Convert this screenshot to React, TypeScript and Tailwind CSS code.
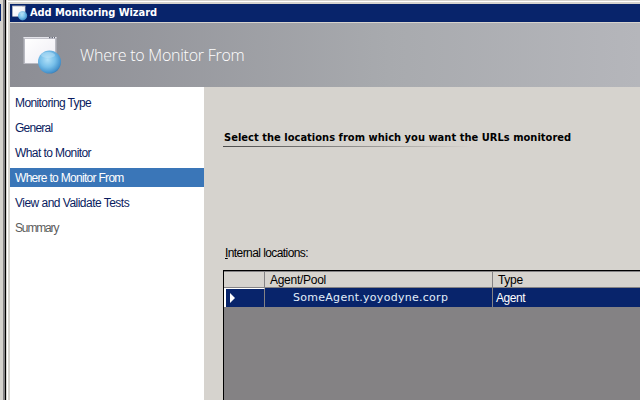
import React from 'react';

function MonitorIcon({ size }: { size: number }) {
  return (
    <svg width={size} height={size} viewBox="0 0 40 40" className="block shrink-0">
      <defs>
        <linearGradient id="pane" x1="0" y1="0" x2="1" y2="1">
          <stop offset="0" stopColor="#ffffff" />
          <stop offset="1" stopColor="#efedf4" />
        </linearGradient>
        <radialGradient id="ball" cx="0.42" cy="0.4" r="0.65">
          <stop offset="0" stopColor="#b0e0f8" />
          <stop offset="0.5" stopColor="#78c0ea" />
          <stop offset="0.88" stopColor="#4592cc" />
          <stop offset="1" stopColor="#3478b0" />
        </radialGradient>
      </defs>
      <rect x="0.5" y="2" width="33" height="27" fill="#b9bac2" />
      <rect x="2" y="4" width="30" height="24" fill="url(#pane)" />
      <rect x="0.5" y="2" width="33" height="1.2" fill="#e4e4ea" />
      <path d="M26 2.6h1.5M28.5 2.6h1.5M31 2.6h1" stroke="#666a78" strokeWidth="1.4" />
      <circle cx="26.5" cy="27" r="11.5" fill="url(#ball)" />
      <ellipse cx="25" cy="20" rx="7" ry="3" fill="#d5effb" opacity="0.35" />
    </svg>
  );
}

const steps = [
  { label: 'Monitoring Type', spacing: 'tracking-[-0.6px]' },
  { label: 'General', spacing: 'tracking-[-0.75px]' },
  { label: 'What to Monitor', spacing: 'tracking-[-0.58px]' },
  { label: 'Where to Monitor From', spacing: 'tracking-[-0.7px]', selected: true },
  { label: 'View and Validate Tests', spacing: 'tracking-[-0.52px]' },
  { label: 'Summary', spacing: 'tracking-[-1.15px]', disabled: true },
];

function Sidebar() {
  return (
    <nav className="flex w-[194px] shrink-0 flex-col gap-[6px] bg-white pt-[6px] text-[12px] leading-[20px]">
      {steps.map((s) => (
        <div
          key={s.label}
          className={`h-[19px] whitespace-nowrap pl-[5px] ${s.spacing} ${
            s.selected ? 'bg-[#3a76b8] text-white' : s.disabled ? 'text-[#5c5c5c]' : 'text-[#0a1c60]'
          }`}
        >
          {s.label}
        </div>
      ))}
    </nav>
  );
}

function LocationsTable() {
  return (
    <div className="ml-[19px] mt-[9px] flex flex-1 flex-col border-l border-t border-black bg-[#848284] text-[12px]">
      <div className="flex h-[17px] border-b border-t border-[#848284] bg-[#d6d3ce] leading-[17px] text-black">
        <div className="w-[41px] border-r border-[#848284]" />
        <div className="w-[228px] border-r border-[#848284] pl-[5px] tracking-[-0.28px]">Agent/Pool</div>
        <div className="pl-[5px] tracking-[-0.3px]">Type</div>
      </div>
      <div className="flex h-[19px] bg-[#08246b] leading-[20px] text-white">
        <div className="flex w-[41px] items-center border-r border-t border-l-2 border-r-[#848284] border-l-white border-t-white pl-[4px]">
          <svg width="5" height="10" viewBox="0 0 5 10" className="-mt-px"><path d="M0 0L5 5L0 10Z" fill="white" /></svg>
        </div>
        <div className="w-[228px] border-r border-[#848284] pl-[28px] font-['DejaVu_Sans',sans-serif] text-[11px] leading-[20px] tracking-[0.28px] text-[#e2eefa]">SomeAgent.yoyodyne.corp</div>
        <div className="pl-[3px] tracking-[-0.45px]">Agent</div>
      </div>
    </div>
  );
}

export default function App() {
  return (
    <div className="flex h-[400px] w-[640px] overflow-hidden bg-[#d6d3ce] font-['Liberation_Sans',Arial,sans-serif]">
      <div className="w-[3px] pt-[4px]"><div className="h-[17px] w-px bg-[#08246b]" /></div>
      <div className="w-[2px] bg-[#848284]" />
      <div className="w-px bg-black" />
      <div className="w-px bg-[#d6d3ce]" />
      <div className="w-px bg-white" />
      <div className="flex min-w-0 flex-1 flex-col">
        <div className="h-px bg-[#d6d3ce]" />
        <div className="h-px bg-white" />
        <div className="h-[2px] bg-[#d6d3ce]" />
        <div className="flex min-h-0 flex-1 flex-col pl-[2px]">
          <header className="flex h-[18px] items-center bg-[#08246b] pl-[2px] text-white">
            <MonitorIcon size={16} />
            <span className="ml-[2px] whitespace-nowrap font-['DejaVu_Sans_Condensed','DejaVu_Sans',sans-serif] text-[11px] font-bold leading-[18px] tracking-[-0.07px]">Add Monitoring Wizard</span>
          </header>
          <div className="h-px bg-[#d6d3ce]" />
          <div className="flex h-[64px] items-center bg-linear-to-r from-[#8c8d94] via-[#a8aaae] via-60% to-[#b5b6bb] pl-[13px] text-white">
            <MonitorIcon size={40} />
            <h1 className="ml-[17px] whitespace-nowrap font-['Open_Sans',sans-serif] text-[16px] font-light tracking-[-0.25px]">Where to Monitor From</h1>
          </div>
          <div className="flex min-h-0 flex-1">
            <Sidebar />
            <main className="flex min-w-0 flex-1 flex-col">
              <h2 className="mt-[42px] h-[17px] whitespace-nowrap pl-[20px] font-['DejaVu_Sans_Condensed','DejaVu_Sans',sans-serif] text-[11px] font-bold leading-[17px] tracking-[0.03px] text-black">Select the locations from which you want the URLs monitored</h2>
              <div className="ml-[19px] h-px w-[250px] bg-linear-to-r from-[#4a4a4a] to-[#d6d3ce]" />
              <div className="mt-[97px] h-[17px] pl-[21px] text-[12px] leading-[18px] tracking-[-0.58px] text-black"><span className="underline">I</span>nternal locations:</div>
              <LocationsTable />
            </main>
          </div>
        </div>
      </div>
    </div>
  );
}
